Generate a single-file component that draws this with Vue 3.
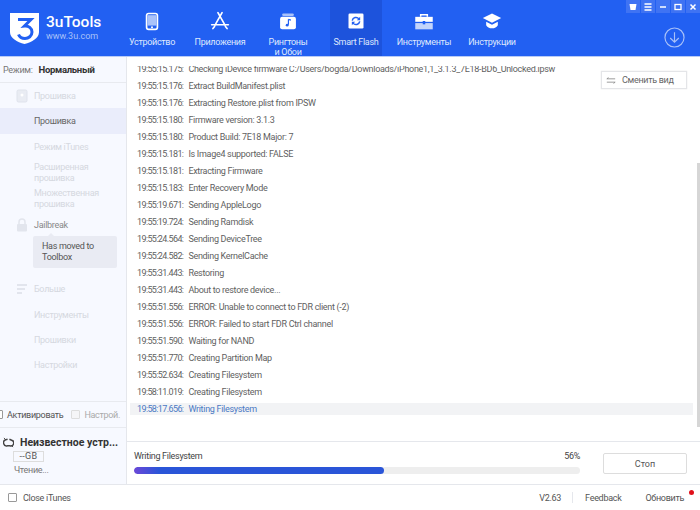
<script setup>
const nav = [
  { id: 'device', label: ['Устройство'] },
  { id: 'apps', label: ['Приложения'] },
  { id: 'ring', label: ['Рингтоны', 'и Обои'] },
  { id: 'flash', label: ['Smart Flash'], active: true },
  { id: 'tools', label: ['Инструменты'] },
  { id: 'guide', label: ['Инструкции'] },
]
const logs = [
  ['19:55:15.175:', 'Checking iDevice firmware C:/Users/bogda/Downloads/iPhone1,1_3.1.3_7E18-BD6_Unlocked.ipsw'],
  ['19:55:15.176:', 'Extract BuildManifest.plist'],
  ['19:55:15.176:', 'Extracting Restore.plist from IPSW'],
  ['19:55:15.180:', 'Firmware version: 3.1.3'],
  ['19:55:15.180:', 'Product Build: 7E18 Major: 7'],
  ['19:55:15.181:', 'Is Image4 supported: FALSE'],
  ['19:55:15.181:', 'Extracting Firmware'],
  ['19:55:15.183:', 'Enter Recovery Mode'],
  ['19:55:19.671:', 'Sending AppleLogo'],
  ['19:55:19.724:', 'Sending Ramdisk'],
  ['19:55:24.564:', 'Sending DeviceTree'],
  ['19:55:24.582:', 'Sending KernelCache'],
  ['19:55:31.443:', 'Restoring'],
  ['19:55:31.443:', 'About to restore device...'],
  ['19:55:51.556:', 'ERROR: Unable to connect to FDR client (-2)'],
  ['19:55:51.556:', 'ERROR: Failed to start FDR Ctrl channel'],
  ['19:55:51.590:', 'Waiting for NAND'],
  ['19:55:51.770:', 'Creating Partition Map'],
  ['19:55:52.634:', 'Creating Filesystem'],
  ['19:58:11.019:', 'Creating Filesystem'],
  ['19:58:17.656:', 'Writing Filesystem'],
]
</script>

<template>
  <div class="app">
    <header class="top">
      <div class="brand">
        <svg class="logo" viewBox="0 0 30 31" width="30" height="31">
          <path d="M0 0H29V19C29 25 22 29 14.500 31C7 29 0 25 0 19Z" fill="#fff" />
          <path d="M8 6.500H21L14.500 13C18.500 12.500 22 15 22 19C22 23 18.500 25.500 15 25.500C12 25.500 9.500 24 8.500 21.500" fill="none" stroke="#2260f2" stroke-width="3" />
        </svg>
        <div class="brand-text">
          <div class="brand-name">3uTools</div>
          <div class="brand-url">www.3u.com</div>
        </div>
      </div>
      <nav class="nav">
        <div v-for="n in nav" :key="n.id" class="nav-item" :class="{ active: n.active }">
          <svg class="nav-icon" viewBox="0 0 24 24" width="20" height="20">
            <g v-if="n.id === 'device'">
              <rect x="5.500" y="3" width="13" height="19" rx="2.500" fill="none" stroke="#fff" stroke-width="2" />
              <rect x="6.500" y="5" width="11" height="12.500" fill="#a9c2fa" />
              <circle cx="12" cy="19.600" r="1.200" fill="#fff" />
            </g>
            <g v-else-if="n.id === 'apps'" fill="none" stroke="#fff" stroke-width="2" stroke-linecap="round">
              <path d="M9.500 2L18 17" /><path d="M14.500 2L6 17" /><path d="M2 16.500H22" /><path d="M3.500 21L5.500 18.500M20.500 21L18.500 18.500" />
            </g>
            <g v-else-if="n.id === 'ring'">
              <rect x="5" y="3" width="14" height="3" rx="1.500" fill="#a9c2fa" />
              <rect x="2.500" y="7" width="19" height="15" rx="2.500" fill="#fff" />
              <path d="M12.500 10V16.500M12.500 10L15.500 11" stroke="#2260f2" stroke-width="1.400" fill="none" />
              <circle cx="11" cy="17" r="1.700" fill="#2260f2" />
            </g>
            <g v-else-if="n.id === 'flash'">
              <rect x="3" y="3" width="18" height="18" rx="1.500" fill="#fff" />
              <path d="M7.500 11.500A4.500 4.500 0 0 1 15.500 9.500M16.500 12.500A4.500 4.500 0 0 1 8.500 14.500" fill="none" stroke="#2260f2" stroke-width="1.800" />
              <path d="M17 7V11H13Z M7 17V13H11Z" fill="#2260f2" />
            </g>
            <g v-else-if="n.id === 'tools'">
              <path d="M8 7V4.500H16V7" fill="none" stroke="#fff" stroke-width="1.800" />
              <path d="M1.500 7H22.500V13H1.500Z" fill="#fff" />
              <path d="M1.500 14.500H22.500V22H1.500Z" fill="#c4d5fb" />
              <rect x="10.500" y="12" width="3" height="4" fill="#2260f2" />
            </g>
            <g v-else>
              <path d="M12 3L23 8.500L12 14L1 8.500Z" fill="#fff" />
              <path d="M5 13V17C7 22 17 22 19 17V13L12 16.500Z" fill="#fff" />
            </g>
          </svg>
          <div class="nav-label">
            <div v-for="l in n.label" :key="l">{{ l }}</div>
          </div>
        </div>
      </nav>
      <div class="win">
        <span class="win-btn">
          <svg viewBox="0 0 10 10" width="10" height="10"><path d="M1.500 2H8.500L7.500 8H2.500Z" fill="#fff" /></svg>
        </span>
        <span class="win-btn">
          <svg viewBox="0 0 10 10" width="10" height="10"><path d="M1.500 2H8.500M1.500 5H8.500M1.500 8H8.500" stroke="#fff" stroke-width="1.400" /></svg>
        </span>
        <span class="win-btn">
          <svg viewBox="0 0 10 10" width="10" height="10"><path d="M2 5H8" stroke="#fff" stroke-width="1.500" /></svg>
        </span>
        <span class="win-btn">
          <svg viewBox="0 0 10 10" width="10" height="10"><rect x="2" y="2.500" width="6" height="5" fill="none" stroke="#fff" stroke-width="1.300" /></svg>
        </span>
        <span class="win-btn">
          <svg viewBox="0 0 10 10" width="10" height="10"><path d="M2.500 2.500L7.500 7.500M7.500 2.500L2.500 7.500" stroke="#fff" stroke-width="1.500" /></svg>
        </span>
      </div>
      <svg class="dl" viewBox="0 0 22 22" width="21" height="21">
        <circle cx="11" cy="11" r="10" fill="none" stroke="#a9c1f8" stroke-width="1.200" />
        <path d="M11 5.500V16M6.500 11.500L11 16L15.500 11.500" fill="none" stroke="#a9c1f8" stroke-width="1.200" />
      </svg>
    </header>

    <div class="body">
      <aside class="side">
        <div class="mode"><span class="mode-k">Режим:</span><b>Нормальный</b></div>
        <div class="menu">
          <div class="m-row m-head">
            <svg viewBox="0 0 12 14" width="12" height="14"><rect x="1" y="1" width="10" height="12" rx="1.500" fill="#e9ecf3" stroke="#dfe3ec" /><circle cx="6" cy="6" r="1.500" fill="#fff" /></svg>
            <span>Прошивка</span>
          </div>
          <div class="m-row m-sel">Прошивка</div>
          <div class="m-row m-sub">Режим iTunes</div>
          <div class="m-two m-sub">Расширенная<br />прошивка</div>
          <div class="m-two m-sub">Множественная<br />прошивка</div>
          <div class="m-row m-head jb">
            <svg viewBox="0 0 12 14" width="12" height="14"><path d="M3 6V4A3 3 0 0 1 9 4V6" fill="none" stroke="#e2e5ed" stroke-width="1.500" /><rect x="1" y="6" width="10" height="7.500" rx="1" fill="#e2e5ed" /></svg>
            <span>Jailbreak</span>
          </div>
          <div class="tip">Has moved to<br />Toolbox</div>
          <div class="m-row m-head more">
            <svg viewBox="0 0 12 12" width="12" height="12"><path d="M1 2H11M1 6H9M1 10H6" stroke="#e2e5ed" stroke-width="1.800" /></svg>
            <span>Больше</span>
          </div>
          <div class="m-row m-sub after-more">Инструменты</div>
          <div class="m-row m-sub">Прошивки</div>
          <div class="m-row m-sub">Настройки</div>
        </div>
        <div class="opts">
          <span class="cb cb-left"></span><span class="opt-a">Активировать</span>
          <span class="cb cb-dim"></span><span class="opt-b">Настрой.</span>
        </div>
        <div class="dev">
          <div class="dev-head">
            <svg viewBox="0 0 12 12" width="11" height="11"><path d="M5 2.500L3 3A3 3 0 0 0 5 9.500L7.500 9.500A3 3 0 0 0 9.500 3.500L7 2.500" fill="none" stroke="#444" stroke-width="1.600" /><path d="M1 1L3 3M9 9L11 11" stroke="#444" /></svg>
            <b>Неизвестное устр...</b>
          </div>
          <div class="gb">--GB</div>
          <div class="read">Чтение...</div>
        </div>
      </aside>

      <main class="main">
        <div class="log-wrap">
          <div class="viewport">
            <div class="log">
              <div v-for="(r, i) in logs" :key="i" class="row" :class="{ cur: i === logs.length - 1 }">
                <span class="t">{{ r[0] }}</span><span>{{ r[1] }}</span>
              </div>
            </div>
          </div>
          <button class="switch">
            <svg viewBox="0 0 12 8" width="10" height="7"><path d="M1 2H11M1 6H11" stroke="#888" /><path d="M1 2L3 0.500M11 6L9 7.500" stroke="#888" /></svg>
            <span>Сменить вид</span>
          </button>
          <div class="thumb"></div>
        </div>
        <div class="prog">
          <div class="prog-main">
            <div class="prog-text"><span>Writing Filesystem</span><span>56%</span></div>
            <div class="track"><div class="fill" :style="{ width: '56%' }"></div></div>
          </div>
          <button class="stop">Стоп</button>
        </div>
      </main>
    </div>

    <footer class="foot">
      <span class="cb foot-cb"></span><span>Close iTunes</span>
      <span class="grow"></span>
      <span>V2.63</span>
      <span class="sep"></span>
      <span>Feedback</span>
      <span class="upd">Обновить<i class="dot"></i></span>
    </footer>
  </div>
</template>

<style>
html, body { margin: 0; padding: 0; background: #fff; }
</style>

<style scoped>
.app {
  width: 700px;
  height: 510px;
  overflow: hidden;
  display: flex;
  flex-direction: column;
  font-family: Roboto, "Noto Sans", sans-serif;
  font-size: 9px;
  letter-spacing: -0.3px;
  color: #555;
  background: #fff;
}
.top {
  height: 56px;
  flex: none;
  background: #2260f2;
  border-bottom: 1px solid #b8cbf6;
  display: flex;
  position: relative;
}
.brand { width: 126px; flex: none; display: flex; align-items: center; padding-left: 10px; box-sizing: border-box; gap: 6px; color: #fff; letter-spacing: 0; }
.brand-name { font-size: 15.500px; line-height: 17px; font-weight: 500; }
.brand-url { font-size: 9px; line-height: 11px; color: #a9c1f8; }
.nav { display: flex; gap: 16px; }
.nav-item { width: 52px; height: 56px; display: flex; flex-direction: column; align-items: center; padding-top: 11px; box-sizing: border-box; color: #dfe8fd; white-space: nowrap; }
.nav-item.active { background: #1d53dc; }
.nav-icon { flex: none; }
.nav-label { margin-top: 6px; line-height: 10px; text-align: center; }
.win { position: absolute; top: 0; right: 0; display: flex; gap: 1px; }
.win-btn { width: 14px; height: 13px; background: #3f73f3; display: flex; align-items: center; justify-content: center; }
.dl { position: absolute; top: 27px; right: 15px; }

.body { flex: 1; min-height: 0; display: flex; }
.side { width: 127px; flex: none; box-sizing: border-box; background: #f7f9ff; border-right: 1px solid #e5e7ec; display: flex; flex-direction: column; }
.mode { height: 26px; box-sizing: border-box; display: flex; align-items: center; padding-left: 3px; gap: 6px; border-bottom: 1px solid #e8eaef; flex: none; }
.mode-k { color: #777; }
.mode b { color: #333; font-weight: 700; font-size: 9.500px; }
.menu { flex: 1; min-height: 0; }
.m-row { height: 25px; display: flex; align-items: center; padding-left: 34px; }
.m-head { padding-left: 16px; gap: 6px; color: #d5d8e0; }
.m-sel { height: 26px; background: #eaedfb; color: #666; }
.m-sub { color: #d5d8e0; }
.m-two { padding-left: 34px; line-height: 11px; padding-top: 2.500px; height: 26px; box-sizing: border-box; }
.jb { color: #888; margin-top: 1px; }
.tip { margin: -1px 9px 0 33px; background: #e9ebf3; border-radius: 2px; padding: 5px 9px; line-height: 11px; height: 32px; box-sizing: border-box; color: #555; position: relative; }
.tip::before { content: ""; position: absolute; left: 15px; top: -3px; border: 3px solid transparent; border-top: 0; border-bottom-color: #e9ebf3; }
.more { margin-top: 8.500px; }
.after-more { margin-top: 1px; }
.opts { height: 27px; box-sizing: border-box; flex: none; display: flex; align-items: center; border-top: 1px solid #e8eaef; border-bottom: 1px solid #e8eaef; color: #555; }
.cb { width: 9px; height: 9px; border: 1px solid #999; background: #fff; border-radius: 1px; flex: none; display: inline-block; box-sizing: border-box; }
.cb-left { margin-left: -6px; }
.opt-a { margin-left: 4px; }
.cb-dim { border-color: #ddd; background: #f5f5f7; margin-left: 8px; }
.opt-b { margin-left: 4px; color: #aaa; }
.dev { height: 56px; flex: none; padding: 8px 0 0 3px; box-sizing: border-box; }
.dev-head { display: flex; align-items: center; gap: 6px; height: 12px; }
.dev-head b { color: #333; font-size: 10.500px; font-weight: 700; white-space: nowrap; letter-spacing: 0; }
.gb { width: 31px; height: 11px; box-sizing: border-box; line-height: 9px; border: 1px solid #ddd; text-align: center; margin: 3px 0 0 10px; letter-spacing: 0.3px; }
.read { margin: 3px 0 0 11px; line-height: 11px; color: #777; }

.main { flex: 1; min-width: 0; display: flex; flex-direction: column; }
.log-wrap { flex: 1; min-height: 0; position: relative; overflow: hidden; border-bottom: 1px solid #e5e7ec; }
.viewport { position: absolute; top: 9px; bottom: 0; left: 0; right: 0; overflow: hidden; }
.log { padding: 0 7px 0 3px; margin-top: -5.500px; }
.row { height: 17px; line-height: 17px; padding-left: 7px; white-space: nowrap; color: #5f5f5f; }
.t { margin-right: 5px; letter-spacing: -0.62px; }
.cur { height: 12px; line-height: 12px; margin-top: 2px; background: #f2f3f5; color: #4a79c4; }
.switch { position: absolute; top: 14px; right: 13px; width: 86px; height: 18px; background: #fff; border: 1px solid #e4e5e8; display: flex; align-items: center; padding: 0 0 0 4px; gap: 6px; font: inherit; letter-spacing: inherit; color: #666; box-shadow: 0 0 1px #ddd; }
.thumb { position: absolute; right: 0; top: 106px; width: 3.500px; height: 264px; background: #d6d6d6; }
.prog { height: 42px; flex: none; display: flex; padding: 8px 13px 0 7px; gap: 23px; box-sizing: border-box; }
.prog-main { flex: 1; }
.prog-text { display: flex; justify-content: space-between; color: #444; line-height: 12px; margin-bottom: 5px; }
.track { height: 7px; background: #eeeeee; border-radius: 3.500px; overflow: hidden; }
.fill { height: 100%; border-radius: 3.500px; background: linear-gradient(90deg, #6b48d8, #2a55d8 10%); }
.stop { width: 84px; height: 21px; margin-top: 3px; background: #fff; border: 1px solid #ddd; border-radius: 2px; font: inherit; color: #555; padding: 0; }

.foot { height: 26px; box-sizing: border-box; flex: none; border-top: 1px solid #e5e7ec; display: flex; align-items: center; color: #555; padding: 0 16px 0 8px; }
.foot-cb { margin-right: 6px; }
.grow { flex: 1; }
.sep { width: 1px; height: 11px; background: #e5e7ec; margin: 0 12px 0 11px; }
.upd { margin-left: 24px; position: relative; }
.dot { position: absolute; right: -10px; top: -3px; width: 5px; height: 5px; border-radius: 50%; background: #e0101a; }
</style>
